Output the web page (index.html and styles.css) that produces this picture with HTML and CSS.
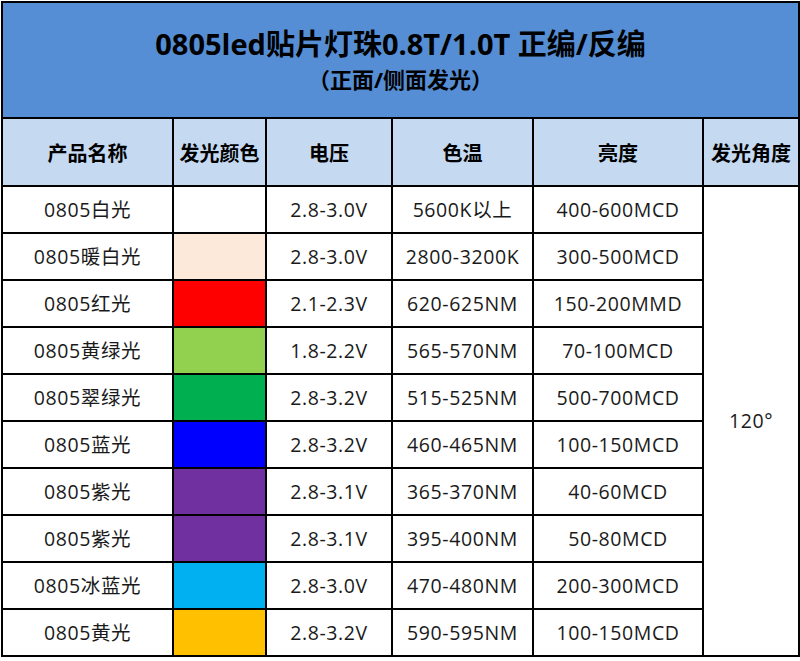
FILE: index.html
```html
<!DOCTYPE html>
<html lang="zh">
<head>
<meta charset="utf-8">
<title>0805led贴片灯珠</title>
<link rel="stylesheet" href="styles.css">
</head>
<body>
<table class="spec">
  <colgroup>
    <col class="c-name">
    <col class="c-color">
    <col class="c-volt">
    <col class="c-temp">
    <col class="c-bright">
    <col class="c-angle">
  </colgroup>
  <thead>
    <tr class="title-row">
      <th colspan="6">
        <div class="title">0805led贴片灯珠0.8T/1.0T 正编/反编</div>
        <div class="subtitle">（正面/侧面发光）</div>
      </th>
    </tr>
    <tr class="head-row">
      <th>产品名称</th>
      <th>发光颜色</th>
      <th>电压</th>
      <th>色温</th>
      <th>亮度</th>
      <th>发光角度</th>
    </tr>
  </thead>
  <tbody>
    <tr><td>0805白光</td><td class="sw white"></td><td>2.8-3.0V</td><td>5600K以上</td><td>400-600MCD</td><td class="angle" rowspan="10">120°</td></tr>
    <tr><td>0805暖白光</td><td class="sw warm"></td><td>2.8-3.0V</td><td>2800-3200K</td><td>300-500MCD</td></tr>
    <tr><td>0805红光</td><td class="sw red"></td><td>2.1-2.3V</td><td>620-625NM</td><td>150-200MMD</td></tr>
    <tr><td>0805黄绿光</td><td class="sw yg"></td><td>1.8-2.2V</td><td>565-570NM</td><td>70-100MCD</td></tr>
    <tr><td>0805翠绿光</td><td class="sw green"></td><td>2.8-3.2V</td><td>515-525NM</td><td>500-700MCD</td></tr>
    <tr><td>0805蓝光</td><td class="sw blue"></td><td>2.8-3.2V</td><td>460-465NM</td><td>100-150MCD</td></tr>
    <tr><td>0805紫光</td><td class="sw purple"></td><td>2.8-3.1V</td><td>365-370NM</td><td>40-60MCD</td></tr>
    <tr><td>0805紫光</td><td class="sw purple"></td><td>2.8-3.1V</td><td>395-400NM</td><td>50-80MCD</td></tr>
    <tr><td>0805冰蓝光</td><td class="sw ice"></td><td>2.8-3.0V</td><td>470-480NM</td><td>200-300MCD</td></tr>
    <tr><td>0805黄光</td><td class="sw yellow"></td><td>2.8-3.2V</td><td>590-595NM</td><td>100-150MCD</td></tr>
  </tbody>
</table>
</body>
</html>
```

FILE: styles.css
```css
html, body {
  margin: 0;
  padding: 0;
  background: #ffffff;
}
body {
  font-family: "Open Sans", "Noto Sans CJK SC", sans-serif;
  color: #1a1a1a;
}
.spec {
  border-collapse: collapse;
  table-layout: fixed;
  width: 798px;
  margin: 1px 0 0 1px;
}
.c-name { width: 171px; }
.c-color { width: 93px; }
.c-volt { width: 126px; }
.c-temp { width: 141px; }
.c-bright { width: 170px; }
.c-angle { width: 96px; }

.spec th, .spec td {
  border: 2px solid #000;
  padding: 0;
  text-align: center;
  vertical-align: middle;
}
.title-row th {
  background: #558ed5;
  height: 114px;
  color: #000;
  font-weight: 700;
}
.title {
  font-size: 29px;
  line-height: 34px;
  margin-top: 0;
}
.subtitle {
  font-size: 22px;
  line-height: 28px;
  margin-top: 4px;
}
.head-row th {
  background: #c5d9f1;
  height: 66px;
  font-size: 20px;
  font-weight: 700;
  color: #000;
}
.spec td {
  height: 45px;
  font-size: 19.5px;
  letter-spacing: 0.6px;
  line-height: 24px;
}
.sw.white { background: #ffffff; }
.sw.warm { background: #fde9d9; }
.sw.red { background: #ff0000; }
.sw.yg { background: #92d050; }
.sw.green { background: #00b050; }
.sw.blue { background: #0000ff; }
.sw.purple { background: #7030a0; }
.sw.ice { background: #00b0f0; }
.sw.yellow { background: #ffc000; }
```
